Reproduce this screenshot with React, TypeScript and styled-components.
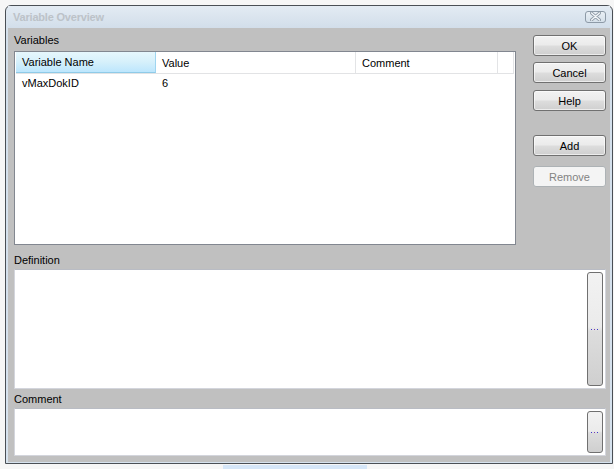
import React from "react";
import styled, { createGlobalStyle } from "styled-components";

const Global = createGlobalStyle`
  html, body { margin: 0; padding: 0; background: #f6f6f6; }
  body { font-family: "Liberation Sans", Arial, sans-serif; font-size: 11px; color: #000; }
  #root { width: 614px; height: 469px; overflow: hidden; }
`;

const Page = styled.div`
  width: 614px;
  height: 469px;
  padding-top: 5px;
  box-sizing: border-box;
  display: flex;
  flex-direction: column;
`;

const Window = styled.div`
  margin-left: 5px;
  width: 608px;
  height: 460px;
  box-sizing: border-box;
  border: 1px solid #4a4f55;
  border-radius: 6px 6px 0 0;
  background: linear-gradient(180deg, #e2eaf2 0%, #d3dfeb 6%, #d6e2ee 100%);
  display: flex;
  flex-direction: column;
  padding: 0 2px 1px 2px;
`;

const TitleBar = styled.div`
  height: 22px;
  display: flex;
  align-items: center;
  justify-content: space-between;
  padding: 0 4px 0 5px;
  background: linear-gradient(180deg, #e3ebf3 0%, #d2deea 100%);
`;

const TitleText = styled.span`
  font-weight: bold;
  font-size: 11px;
  color: #bcc2c8;
  letter-spacing: -0.2px;
`;

const CloseBtn = styled.div`
  width: 19px;
  height: 10px;
  border: 1px solid #8d9aa7;
  border-radius: 3px;
  background: linear-gradient(180deg, #e9eff5 0%, #d5e0ea 100%);
  display: flex;
  align-items: center;
  justify-content: center;
  margin-top: -1px;
`;

const Body = styled.div`
  flex: 1;
  background: #c0c0c0;
  padding: 4px 4px 5px 6px;
  display: flex;
  flex-direction: column;
`;

const TopSection = styled.div`
  display: flex;
  gap: 17px;
`;

const LeftCol = styled.div`
  display: flex;
  flex-direction: column;
  width: 503px;
`;

const Label = styled.div<{ $mt?: number }>`
  height: 16px;
  line-height: 16px;
  margin-top: ${(p) => p.$mt ?? 0}px;
`;

const ListBox = styled.div`
  margin-top: 3px;
  height: 194px;
  box-sizing: border-box;
  border: 1px solid #828790;
  background: #fff;
  padding: 0 1px;
  display: flex;
  flex-direction: column;
`;

const HeaderRow = styled.div`
  height: 22px;
  display: flex;
  border-bottom: 1px solid #e2e3e5;
  box-sizing: border-box;
`;

const HeaderCell = styled.div<{ $w?: number; $hot?: boolean }>`
  ${(p) => (p.$w ? `width: ${p.$w}px;` : "flex: 1;")}
  box-sizing: border-box;
  padding-left: 6px;
  display: flex;
  align-items: center;
  border-right: 1px solid ${(p) => (p.$hot ? "#9fd5f0" : "#e3e4e6")};
  background: ${(p) =>
    p.$hot ? "linear-gradient(180deg, #e6f7fd 0%, #d6f0fb 50%, #bde6fd 100%)" : "#fff"};
  border-bottom: ${(p) => (p.$hot ? "1px solid #8fcbe8" : "none")};
`;

const DataRow = styled.div`
  height: 17px;
  display: flex;
  align-items: center;
`;

const DataCell = styled.div<{ $w?: number }>`
  ${(p) => (p.$w ? `width: ${p.$w}px;` : "flex: 1;")}
  box-sizing: border-box;
  padding-left: 6px;
`;

const ButtonCol = styled.div`
  display: flex;
  flex-direction: column;
  padding-top: 3px;
`;

const Button = styled.button<{ $mt?: number }>`
  width: 73px;
  height: 21px;
  margin-top: ${(p) => p.$mt ?? 0}px;
  box-sizing: border-box;
  border: 1px solid #707070;
  border-radius: 3px;
  background: linear-gradient(180deg, #f2f2f2 0%, #ebebeb 48%, #dddddd 52%, #cfcfcf 100%);
  font-family: "Liberation Sans", Arial, sans-serif;
  font-size: 11px;
  color: #000;
  padding: 0;
  box-shadow: inset 0 0 0 1px rgba(255, 255, 255, 0.6);
  &:disabled {
    border-color: #adb2b5;
    background: #f4f4f4;
    color: #838383;
    box-shadow: none;
  }
`;

const EditBox = styled.div<{ $h: number }>`
  height: ${(p) => p.$h}px;
  margin-top: 1px;
  box-sizing: border-box;
  border: 1px solid #d3d5dc;
  border-top-color: #b9bcc4;
  background: #fff;
  display: flex;
  justify-content: flex-end;
  padding: 2px 2px 2px 0;
`;

const EllipsisBtn = styled.div`
  width: 16px;
  box-sizing: border-box;
  border: 1px solid #707070;
  border-radius: 3px;
  background: linear-gradient(180deg, #f2f2f2 0%, #ebebeb 48%, #dddddd 52%, #cfcfcf 100%);
  display: flex;
  align-items: center;
  justify-content: center;
`;

const Dots = styled.svg`
  display: block;
`;

const BottomStrip = styled.div`
  margin-left: 223px;
  margin-top: 1px;
  width: 144px;
  height: 4px;
  background: #d5e6f8;
`;

function DotGlyph() {
  return (
    <Dots width="8" height="1" viewBox="0 0 8 1">
      <rect x="0" y="0" width="1" height="1" fill="#3a3ad0" />
      <rect x="3" y="0" width="1" height="1" fill="#7a3ab0" />
      <rect x="6" y="0" width="1" height="1" fill="#3a3ad0" />
    </Dots>
  );
}

export default function App() {
  return (
    <>
      <Global />
      <Page>
        <Window>
          <TitleBar>
            <TitleText>Variable Overview</TitleText>
            <CloseBtn>
              <svg width="11" height="9" viewBox="0 0 11 9">
                <path
                  d="M1.5 1 L9.5 8 M9.5 1 L1.5 8"
                  stroke="#8c98a4"
                  strokeWidth="3"
                  strokeLinecap="round"
                />
                <path
                  d="M1.5 1 L9.5 8 M9.5 1 L1.5 8"
                  stroke="#f4f7fa"
                  strokeWidth="1.4"
                  strokeLinecap="round"
                />
              </svg>
            </CloseBtn>
          </TitleBar>
          <Body>
            <TopSection>
              <LeftCol>
                <Label>Variables</Label>
                <ListBox>
                  <HeaderRow>
                    <HeaderCell $w={140} $hot>
                      Variable Name
                    </HeaderCell>
                    <HeaderCell $w={200}>Value</HeaderCell>
                    <HeaderCell $w={142}>Comment</HeaderCell>
                    <HeaderCell />
                  </HeaderRow>
                  <DataRow>
                    <DataCell $w={140}>vMaxDokID</DataCell>
                    <DataCell $w={200}>6</DataCell>
                    <DataCell />
                  </DataRow>
                </ListBox>
              </LeftCol>
              <ButtonCol>
                <Button>OK</Button>
                <Button $mt={6}>Cancel</Button>
                <Button $mt={7}>Help</Button>
                <Button $mt={24}>Add</Button>
                <Button $mt={10} disabled>
                  Remove
                </Button>
              </ButtonCol>
            </TopSection>
            <Label $mt={7}>Definition</Label>
            <EditBox $h={120}>
              <EllipsisBtn>
                <DotGlyph />
              </EllipsisBtn>
            </EditBox>
            <Label $mt={2}>Comment</Label>
            <EditBox $h={48}>
              <EllipsisBtn>
                <DotGlyph />
              </EllipsisBtn>
            </EditBox>
          </Body>
        </Window>
        <BottomStrip />
      </Page>
    </>
  );
}
